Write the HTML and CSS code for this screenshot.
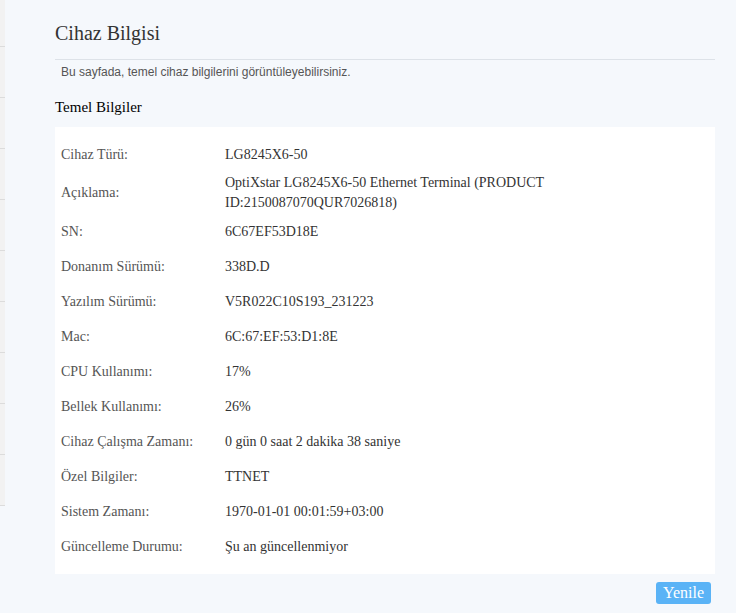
FILE: index.html
```html
<!DOCTYPE html>
<html lang="tr">
<head>
<meta charset="utf-8">
<title>Cihaz Bilgisi</title>
<link rel="stylesheet" href="styles.css">
</head>
<body>
<div class="layout">
  <nav class="side">
    <div class="side-item"></div>
    <div class="side-item"></div>
    <div class="side-item"></div>
    <div class="side-item"></div>
    <div class="side-item"></div>
    <div class="side-item"></div>
    <div class="side-item"></div>
    <div class="side-item"></div>
    <div class="side-item"></div>
    <div class="side-item"></div>
  </nav>
  <main class="content">
    <h1 class="page-title">Cihaz Bilgisi</h1>
    <p class="page-desc">Bu sayfada, temel cihaz bilgilerini görüntüleyebilirsiniz.</p>
    <h2 class="section-title">Temel Bilgiler</h2>
    <div class="info-box">
      <table class="info-table">
        <tr><td class="info-label">Cihaz Türü:</td><td class="info-value">LG8245X6-50</td></tr>
        <tr><td class="info-label">Açıklama:</td><td class="info-value"><span class="wrap">OptiXstar LG8245X6-50 Ethernet Terminal (PRODUCT ID:2150087070QUR7026818)</span></td></tr>
        <tr><td class="info-label">SN:</td><td class="info-value">6C67EF53D18E</td></tr>
        <tr><td class="info-label">Donanım Sürümü:</td><td class="info-value">338D.D</td></tr>
        <tr><td class="info-label">Yazılım Sürümü:</td><td class="info-value">V5R022C10S193_231223</td></tr>
        <tr><td class="info-label">Mac:</td><td class="info-value">6C:67:EF:53:D1:8E</td></tr>
        <tr><td class="info-label">CPU Kullanımı:</td><td class="info-value">17%</td></tr>
        <tr><td class="info-label">Bellek Kullanımı:</td><td class="info-value">26%</td></tr>
        <tr><td class="info-label">Cihaz Çalışma Zamanı:</td><td class="info-value">0 gün 0 saat 2 dakika 38 saniye</td></tr>
        <tr><td class="info-label">Özel Bilgiler:</td><td class="info-value">TTNET</td></tr>
        <tr><td class="info-label">Sistem Zamanı:</td><td class="info-value">1970-01-01 00:01:59+03:00</td></tr>
        <tr><td class="info-label">Güncelleme Durumu:</td><td class="info-value">Şu an güncellenmiyor</td></tr>
      </table>
    </div>
    <div class="actions">
      <button class="btn" type="button">Yenile</button>
    </div>
  </main>
</div>
</body>
</html>
```
FILE: styles.css
```css
html, body {
  margin: 0;
  padding: 0;
  height: 100%;
}

body {
  background: #f5f8fc;
  font-family: "Liberation Serif", "Times New Roman", serif;
  color: #333;
  overflow: hidden;
}

.layout {
  display: flex;
  align-items: flex-start;
}

/* narrow edge of the navigation menu */
.side {
  width: 5px;
  flex: none;
  margin-top: -4px;
  background: #f2f2f2;
}

.side-item {
  height: 50px;
  border-bottom: 1px solid #dcdcdc;
}

.content {
  flex: 1;
  padding: 0 21px 0 50px;
}

.page-title {
  margin: 0;
  padding: 21px 0 14px;
  font-family: "Liberation Serif", "Times New Roman", serif;
  font-size: 20px;
  line-height: 24px;
  font-weight: normal;
  color: #333;
  border-bottom: 1px solid #dde2e8;
}

.page-desc {
  margin: 5px 0 0;
  padding-left: 6px;
  font-family: "Liberation Sans", Arial, sans-serif;
  font-size: 12px;
  line-height: 14px;
  color: #555;
}

.section-title {
  margin: 19px 0 0;
  font-family: "Liberation Serif", "Times New Roman", serif;
  font-size: 15px;
  line-height: 18px;
  font-weight: normal;
  color: #000;
}

.info-box {
  margin-top: 11px;
  background: #fff;
  padding: 10px 0 10px;
}

.info-table {
  width: 100%;
  border-collapse: collapse;
  font-size: 14px;
  line-height: 20px;
}

.info-table td {
  height: 33px;
  padding: 1px 0;
  vertical-align: middle;
}

.info-label {
  width: 164px;
  padding-left: 6px !important;
  color: #555;
}

.info-value {
  color: #333;
}

.wrap {
  display: block;
  max-width: 340px;
}

.actions {
  display: flex;
  justify-content: flex-end;
  padding: 8px 4px 0 0;
}

.btn {
  height: 22px;
  padding: 0 7px;
  border: none;
  border-radius: 3px;
  background: #5ab3f6;
  color: #fff;
  font-family: "Liberation Serif", "Times New Roman", serif;
  font-size: 16px;
  line-height: 22px;
  cursor: pointer;
}
```
